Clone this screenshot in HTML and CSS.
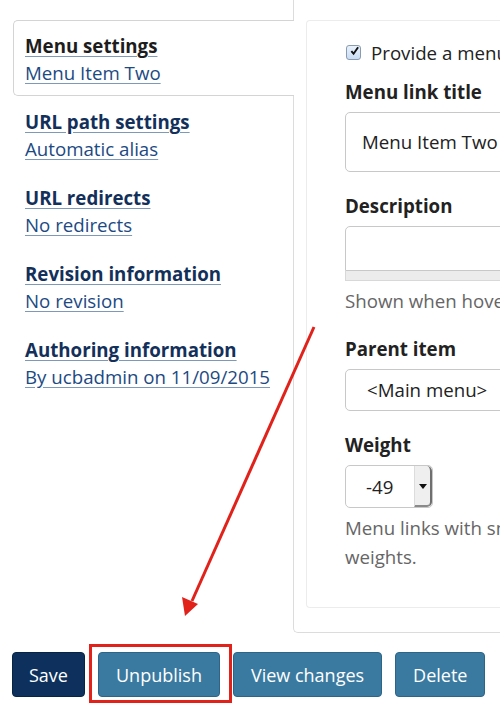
FILE: index.html
```html
<!DOCTYPE html>
<html lang="en">
<head>
  <meta charset="UTF-8">
  <meta name="viewport" content="width=device-width, initial-scale=1.0">
  <title>Edit Menu Item Two</title>
  <link rel="stylesheet" href="styles.css">
</head>
<body>
  <div class="page">
    <div class="vtabs">
      <ul class="vtabs-menu">
        <li class="vtab active">
          <a href="#menu" class="vtab-title">Menu settings</a>
          <a href="#menu" class="vtab-summary">Menu Item Two</a>
        </li>
        <li class="vtab">
          <a href="#path" class="vtab-title">URL path settings</a>
          <a href="#path" class="vtab-summary">Automatic alias</a>
        </li>
        <li class="vtab">
          <a href="#redirects" class="vtab-title">URL redirects</a>
          <a href="#redirects" class="vtab-summary">No redirects</a>
        </li>
        <li class="vtab">
          <a href="#revision" class="vtab-title">Revision information</a>
          <a href="#revision" class="vtab-summary">No revision</a>
        </li>
        <li class="vtab">
          <a href="#author" class="vtab-title">Authoring information</a>
          <a href="#author" class="vtab-summary">By ucbadmin on 11/09/2015</a>
        </li>
      </ul>

      <div class="vtabs-panes">
        <div class="details" id="menu">
          <label class="check-row">
            <span class="checkbox">
              <svg width="14" height="14" viewBox="0 0 14 14"><path d="M3 7.2 L5.8 10.4 L11.6 2.2" fill="none" stroke="#111" stroke-width="2.4"/></svg>
            </span>
            Provide a menu link
          </label>

          <div class="form-item first">
            <label for="title">Menu link title</label>
            <div class="text-input" id="title">Menu Item Two</div>
          </div>

          <div class="form-item">
            <label for="description">Description</label>
            <div class="textarea" id="description"></div>
            <div class="grip"></div>
            <div class="help">Shown when hovering over the menu link.</div>
          </div>

          <div class="form-item">
            <label for="parent">Parent item</label>
            <div class="select" id="parent">&lt;Main menu&gt;</div>
          </div>

          <div class="form-item">
            <label for="weight">Weight</label>
            <div class="weight" id="weight">
              <span class="weight-value">-49</span>
              <span class="spin"></span>
            </div>
            <div class="help">Menu links with smaller weights are displayed before links with larger<br>weights.</div>
          </div>
        </div>
      </div>
    </div>

    <div class="actions">
      <button class="btn btn-primary">Save</button>
      <span class="highlight">
        <button class="btn">Unpublish</button>
      </span>
      <button class="btn">View changes</button>
      <button class="btn">Delete</button>
    </div>

    <!-- annotation arrow pointing at the Unpublish button -->
    <svg class="arrow" width="500" height="707" viewBox="0 0 500 707">
      <line x1="314" y1="327" x2="192" y2="601" stroke="#e0221b" stroke-width="3"/>
      <polygon points="185,616 182,597 198,604" fill="#e0221b"/>
    </svg>
  </div>
</body>
</html>
```

FILE: styles.css
```css
body {
  margin: 0;
  overflow: hidden;
  background: #fff;
  font-family: "Open Sans", "Liberation Sans", sans-serif;
  font-size: 18.7px;
  line-height: 27px;
  color: #222;
}
.page {
  position: relative;
  width: 500px;
  height: 707px;
  overflow: hidden;
}
.vtabs {
  display: flex;
  width: 760px;
}
.vtabs-menu {
  list-style: none;
  margin: 0;
  padding: 20px 0 0 13px;
  width: 280px;
  flex: none;
}
.vtab {
  border: 1px solid transparent;
  border-right: none;
  border-radius: 5px 0 0 5px;
  padding: 11px 0 9px 11px;
  margin-right: -1px;
  position: relative;
  z-index: 1;
}
.vtab.active {
  border-color: #d4d4d4;
  background: #fff;
}
.vtab a {
  display: block;
  width: max-content;
  text-decoration: underline;
  text-decoration-color: #7d98bb;
  text-underline-offset: 3px;
}
.vtab-title {
  font-weight: 700;
  color: #13305a;
}
.vtab.active .vtab-title {
  color: #1d1d1d;
}
.vtab-summary {
  color: #1c4a83;
}
.vtabs-panes {
  flex: 1;
  border-left: 1px solid #dcdcdc;
  border-bottom: 1px solid #dcdcdc;
  border-radius: 0 0 0 5px;
  padding: 20px 0 24px 12px;
}
.details {
  border: 1px solid #ececec;
  border-right: none;
  border-radius: 4px 0 0 4px;
  padding: 18px 0 36px 38px;
}
.check-row {
  display: flex;
  align-items: center;
  gap: 10px;
}
.checkbox {
  width: 13px;
  height: 13px;
  border: 1px solid #8a9bb0;
  border-radius: 3px;
  background: linear-gradient(#eaf2fc, #c9dcf3);
  display: flex;
  align-items: center;
  justify-content: center;
  margin-left: 1px;
}
.checkbox svg {
  margin-top: -3px;
  margin-left: 2px;
}
.form-item {
  margin-top: 20px;
}
.form-item.first {
  margin-top: 12px;
}
.form-item label {
  display: block;
  font-weight: 700;
  margin-bottom: 7px;
}
.text-input {
  height: 58px;
  border: 1px solid #c8c8c8;
  border-radius: 5px;
  padding: 0 16px;
  width: 300px;
  line-height: 58px;
  box-sizing: content-box;
}
.textarea {
  height: 43px;
  width: 332px;
  border: 1px solid #c8c8c8;
  border-radius: 5px 5px 0 0;
}
.grip {
  height: 9px;
  width: 332px;
  background: #ececec;
  border: 1px solid #d8d8d8;
  border-top: none;
}
.help {
  margin-top: 5px;
  line-height: 29px;
  color: #666;
  white-space: nowrap;
}
.select {
  height: 40px;
  line-height: 40px;
  border: 1px solid #c8c8c8;
  border-radius: 5px;
  padding: 0 21px;
  width: 290px;
}
.weight {
  display: flex;
  width: 86px;
  height: 41px;
  border: 1px solid #c8c8c8;
  border-radius: 5px;
  overflow: hidden;
}
.weight-value {
  flex: 1;
  line-height: 41px;
  padding-left: 20px;
}
.spin {
  width: 15px;
  background: #efefef;
  border-left: 1px solid #dcdcdc;
  border-right: 2px solid #6f6f6f;
  border-bottom: 2px solid #8a8a8a;
  border-radius: 0 5px 5px 0;
  position: relative;
}
.spin::after {
  content: "";
  position: absolute;
  left: 4px;
  top: 18px;
  border-left: 4px solid transparent;
  border-right: 4px solid transparent;
  border-top: 5px solid #111;
}
.actions {
  display: flex;
  gap: 13px;
  padding: 19px 0 0 12px;
}
.btn {
  font-family: "Open Sans", "Liberation Sans", sans-serif;
  font-size: 18px;
  height: 45px;
  padding: 0 17px;
  border: 1px solid #2c6588;
  border-radius: 4px;
  background: #3b7aa0;
  color: #fff;
  cursor: pointer;
}
.btn-primary {
  padding: 0 16px;
  background: #0d315c;
  border-color: #082445;
}
.highlight {
  position: relative;
  display: flex;
}
.highlight::after {
  content: "";
  position: absolute;
  left: -9px;
  right: -12px;
  top: -8px;
  bottom: -6px;
  border: 3px solid #e0221b;
}
.arrow {
  position: absolute;
  left: 0;
  top: 0;
  pointer-events: none;
}
```
